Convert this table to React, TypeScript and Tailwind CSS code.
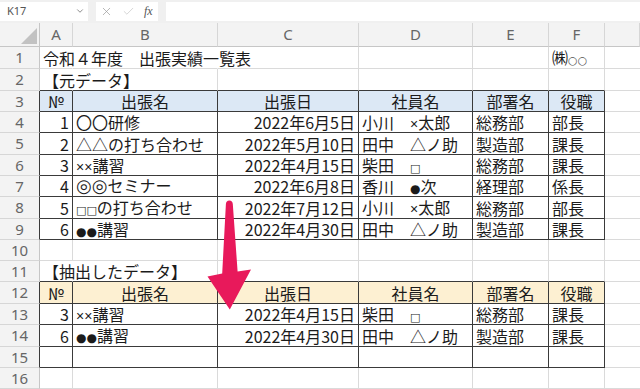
import type { ReactNode } from "react"
import { Check, X, ChevronDown } from "lucide-react"

type Align = "l" | "r" | "c"

interface CellData {
  v?: string
  a?: Align
  spill?: boolean
}

// sheet rows 1..16, columns A..F (G is always empty)
const sheet: CellData[][] = [
  [{ v: "令和４年度　出張実績一覧表", spill: true }, { spill: true }, {}, {}, {}, { v: "㈱○○" }],
  [{ v: "【元データ】", spill: true }, {}, {}, {}, {}, {}],
  [
    { v: "№", a: "c" },
    { v: "出張名", a: "c" },
    { v: "出張日", a: "c" },
    { v: "社員名", a: "c" },
    { v: "部署名", a: "c" },
    { v: "役職", a: "c" },
  ],
  [{ v: "1", a: "r" }, { v: "〇〇研修" }, { v: "2022年6月5日", a: "r" }, { v: "小川　×太郎" }, { v: "総務部" }, { v: "部長" }],
  [{ v: "2", a: "r" }, { v: "△△の打ち合わせ" }, { v: "2022年5月10日", a: "r" }, { v: "田中　△ノ助" }, { v: "製造部" }, { v: "課長" }],
  [{ v: "3", a: "r" }, { v: "××講習" }, { v: "2022年4月15日", a: "r" }, { v: "柴田　□" }, { v: "総務部" }, { v: "課長" }],
  [{ v: "4", a: "r" }, { v: "◎◎セミナー" }, { v: "2022年6月8日", a: "r" }, { v: "香川　●次" }, { v: "経理部" }, { v: "係長" }],
  [{ v: "5", a: "r" }, { v: "□□の打ち合わせ" }, { v: "2022年7月12日", a: "r" }, { v: "小川　×太郎" }, { v: "総務部" }, { v: "部長" }],
  [{ v: "6", a: "r" }, { v: "●●講習" }, { v: "2022年4月30日", a: "r" }, { v: "田中　△ノ助" }, { v: "製造部" }, { v: "課長" }],
  [{}, {}, {}, {}, {}, {}],
  [{ v: "【抽出したデータ】", spill: true }, {}, {}, {}, {}, {}],
  [
    { v: "№", a: "c" },
    { v: "出張名", a: "c" },
    { v: "出張日", a: "c" },
    { v: "社員名", a: "c" },
    { v: "部署名", a: "c" },
    { v: "役職", a: "c" },
  ],
  [{ v: "3", a: "r" }, { v: "××講習" }, { v: "2022年4月15日", a: "r" }, { v: "柴田　□" }, { v: "総務部" }, { v: "課長" }],
  [{ v: "6", a: "r" }, { v: "●●講習" }, { v: "2022年4月30日", a: "r" }, { v: "田中　△ノ助" }, { v: "製造部" }, { v: "課長" }],
  [{}, {}, {}, {}, {}, {}],
  [{}, {}, {}, {}, {}, {}],
]

const letters = ["A", "B", "C", "D", "E", "F", ""]

// the small half-width marks come from a proportional font, not the CJK one
const symbolClass: Record<string, string> = {
  "×": "font-['Liberation_Sans',sans-serif] text-[14px]",
  "□": "font-['DejaVu_Sans',sans-serif] text-[11px]",
  "●": "font-['DejaVu_Sans',sans-serif] text-[12px]",
  "○": "font-['DejaVu_Sans',sans-serif] text-[11px] text-[#555]",
  "◎": "font-['DejaVu_Sans',sans-serif] text-[18px]",
}

const renderText = (s: string): ReactNode[] => {
  const out: ReactNode[] = []
  let buf = ""
  Array.from(s).forEach((ch, i) => {
    if (symbolClass[ch]) {
      if (buf) out.push(buf)
      buf = ""
      out.push(
        <span key={i} className={symbolClass[ch]}>
          {ch}
        </span>
      )
    } else {
      buf += ch
    }
  })
  if (buf) out.push(buf)
  return out
}

// bordered ranges (rows are 1-based, cols 1..6 = A..F)
const inTable = (r: number, c: number) =>
  c >= 1 && c <= 6 && ((r >= 3 && r <= 9) || (r >= 12 && r <= 15))

const fillOf = (r: number) => (r === 3 ? "blue" : r === 12 ? "gold" : "")

const alignClass = (a?: Align) =>
  a === "r" ? "justify-end" : a === "c" ? "justify-center" : "justify-start"

const SheetCell = ({ r, c, cell }: { r: number; c: number; cell: CellData }) => {
  const darkRight = inTable(r, c) || (c >= 1 && inTable(r, c + 1))
  const darkBottom = c >= 1 && c <= 6 && (inTable(r, c) || inTable(r + 1, c))
  const fill = c >= 1 && c <= 6 ? fillOf(r) : ""

  const right = cell.spill
    ? "border-r-transparent"
    : darkRight
      ? "border-r-[#3a3a3a]"
      : "border-r-[#dadada]"
  const bottom = darkBottom ? "border-b-[#3a3a3a]" : "border-b-[#dadada]"
  const bg = fill === "blue" ? "bg-[#dce8f5]" : fill === "gold" ? "bg-[#fdf0d2]" : "bg-transparent"

  return (
    <div
      className={`flex items-center border-r border-b px-[3px] text-[16px] leading-none text-[#1b1b1b] ${right} ${bottom} ${bg} ${alignClass(cell.a)} ${
        cell.spill ? "overflow-visible" : "overflow-hidden"
      }`}
    >
      {cell.v && <span className="flex items-baseline whitespace-nowrap">{renderText(cell.v)}</span>}
    </div>
  )
}

const RowHeader = ({ n }: { n: number }) => {
  const darkRight = inTable(n, 1)
  return (
    <div
      className={`flex items-center justify-center border-r border-b border-b-[#d6d6d6] bg-[#f3f3f3] font-['Noto_Sans',sans-serif] text-[15px] leading-none text-[#666] ${
        darkRight ? "border-r-[#3a3a3a]" : "border-r-[#c6c6c6]"
      }`}
    >
      {n}
    </div>
  )
}

const FormulaBar = () => (
  <div className="flex h-[23px] items-center gap-[8px] bg-[#f0f0f0] pb-[1px] font-['Noto_Sans',sans-serif]">
    <div className="flex h-[19px] w-[88px] items-center justify-between bg-white pl-[7px] pr-[3px] text-[11px] text-[#555]">
      <span>K17</span>
      <ChevronDown size={10} strokeWidth={2} className="text-[#777]" />
    </div>
    <div className="flex h-[19px] w-[62px] items-center gap-[9px] bg-white pl-[4px] text-[#9a9a9a]">
      <X size={13} strokeWidth={1.3} />
      <Check size={13} strokeWidth={1.3} className="text-[#c4c4c4]" />
      <span className="font-['Liberation_Serif',serif] text-[12px] italic text-[#555]">fx</span>
    </div>
    <div className="h-[19px] flex-1 bg-white" />
  </div>
)

const DownArrow = () => (
  <svg className="pointer-events-none absolute left-0 top-0" width="640" height="389" viewBox="0 0 640 389">
    <path
      d="M229.3 200.5 C231.5 200.5 232.6 202 232.8 204 L237.6 271.5 L251 269.5 L229.8 309.5 L207.5 276.5 L222.2 273.5 L225.9 204 C226.1 202 227.2 200.5 229.3 200.5 Z"
      fill="#e8195b"
    />
  </svg>
)

export default function App() {
  return (
    <div className="relative h-[389px] w-[640px] overflow-hidden bg-white font-['Noto_Sans_CJK_JP','Noto_Sans',sans-serif]">
      <FormulaBar />
      <div className="grid grid-cols-[40px_33px_145px_141px_114px_76px_56px_1fr] grid-rows-[24px_22px_22px_21px_21px_22px_21px_21px_22px_21px_21px_21px_22px_21px_22px_21px_21px]">
        {/* column headers */}
        <div className="relative border-r border-b border-r-[#c6c6c6] border-b-[#c6c6c6] bg-[#f3f3f3]">
          <svg className="absolute bottom-[2px] right-[2px]" width="16" height="16" viewBox="0 0 16 16">
            <polygon points="16,0 16,16 0,16" fill="#c2c2c2" />
          </svg>
        </div>
        {letters.map((l, i) => (
          <div
            key={i}
            className="flex items-center justify-center border-r border-b border-r-[#d6d6d6] border-b-[#c6c6c6] bg-[#f3f3f3] font-['Noto_Sans',sans-serif] text-[15px] leading-none text-[#666]"
          >
            {l}
          </div>
        ))}

        {sheet.map((row, ri) => {
          const r = ri + 1
          return [
            <RowHeader key={`h${r}`} n={r} />,
            ...row.map((cell, ci) => <SheetCell key={`${r}-${ci}`} r={r} c={ci + 1} cell={cell} />),
            <div key={`g${r}`} className="border-b border-b-[#dadada]" />,
          ]
        })}
      </div>
      <DownArrow />
    </div>
  )
}
